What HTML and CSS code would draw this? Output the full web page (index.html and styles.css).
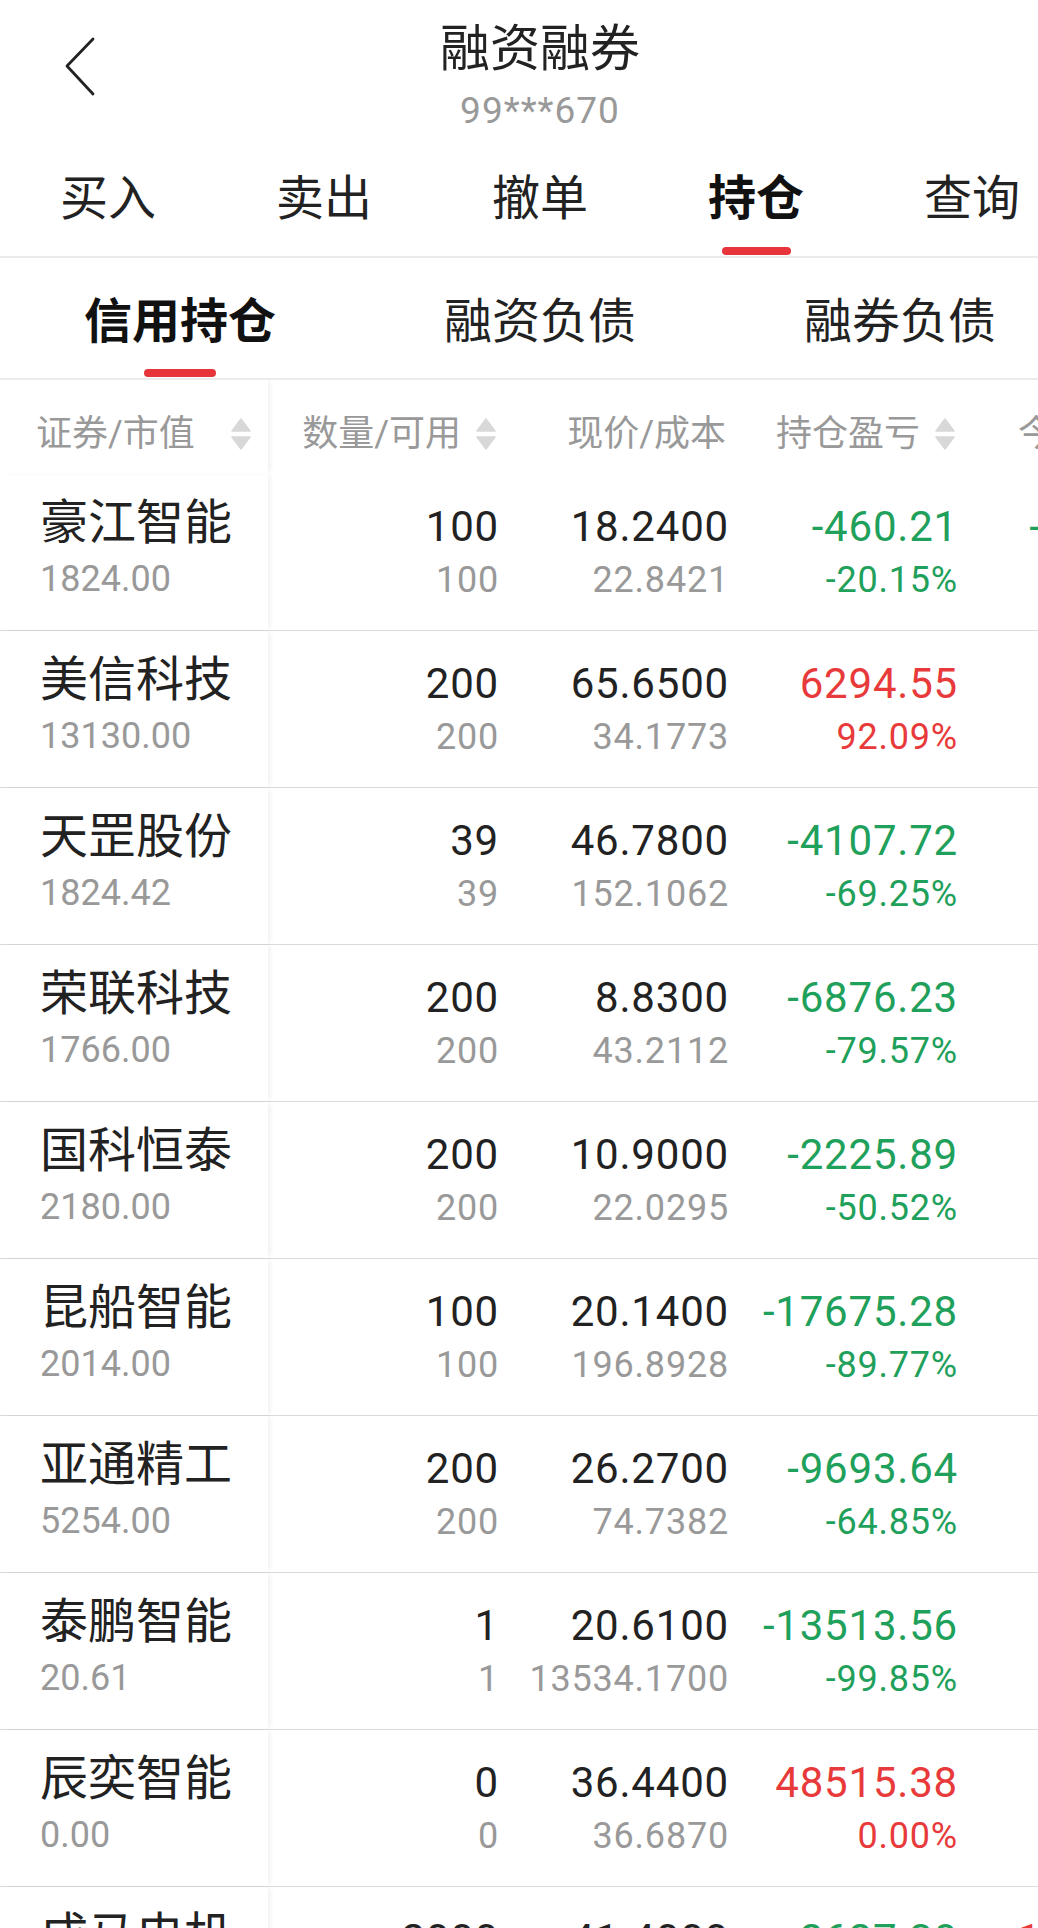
FILE: index.html
```html
<!DOCTYPE html>
<html lang="zh-CN">
<head>
<meta charset="utf-8">
<title>融资融券</title>
<link rel="stylesheet" href="styles.css">
</head>
<body>
<div class="app">
  <header class="nav">
    <a class="nav-back" href="#">
      <svg width="32" height="62" viewBox="0 0 32 62">
        <polyline points="29,3 3,30 29,58" fill="none" stroke="#222" stroke-width="2.8" stroke-linecap="round" stroke-linejoin="round"/>
      </svg>
    </a>
    <div class="nav-title">
      <div class="title">融资融券</div>
      <div class="account">99***670</div>
    </div>
    <div></div>
  </header>

  <nav class="tabs tabs-main">
    <div class="tab"><span class="tab-text">买入</span><i class="tab-bar"></i></div>
    <div class="tab"><span class="tab-text">卖出</span><i class="tab-bar"></i></div>
    <div class="tab"><span class="tab-text">撤单</span><i class="tab-bar"></i></div>
    <div class="tab active"><span class="tab-text">持仓</span><i class="tab-bar"></i></div>
    <div class="tab"><span class="tab-text">查询</span><i class="tab-bar"></i></div>
  </nav>

  <nav class="tabs tabs-sub">
    <div class="tab active"><span class="tab-text">信用持仓</span><i class="tab-bar"></i></div>
    <div class="tab"><span class="tab-text">融资负债</span><i class="tab-bar"></i></div>
    <div class="tab"><span class="tab-text">融券负债</span><i class="tab-bar"></i></div>
  </nav>

  <div class="grid-wrap">
    <div class="grid">
      <div class="row row-head">
        <div class="cell c-name"><span>证券/市值</span><svg class="sort" viewBox="0 0 20 32"><polygon points="10,1 19,13 1,13"/><polygon points="1,19 19,19 10,31"/></svg></div>
        <div class="cell c-qty"><span>数量/可用</span><svg class="sort" viewBox="0 0 20 32"><polygon points="10,1 19,13 1,13"/><polygon points="1,19 19,19 10,31"/></svg></div>
        <div class="cell c-price"><span>现价/成本</span></div>
        <div class="cell c-pnl"><span>持仓盈亏</span><svg class="sort" viewBox="0 0 20 32"><polygon points="10,1 19,13 1,13"/><polygon points="1,19 19,19 10,31"/></svg></div>
        <div class="cell c-today"><span>今日盈亏</span><svg class="sort" viewBox="0 0 20 32"><polygon points="10,1 19,13 1,13"/><polygon points="1,19 19,19 10,31"/></svg></div>
      </div>

      <div class="row">
        <div class="cell c-name"><div class="l1">豪江智能</div><div class="l2">1824.00</div></div>
        <div class="cell c-qty"><div class="l1">100</div><div class="l2">100</div></div>
        <div class="cell c-price"><div class="l1">18.2400</div><div class="l2">22.8421</div></div>
        <div class="cell c-pnl down"><div class="l1">-460.21</div><div class="l2">-20.15%</div></div>
        <div class="cell c-today down"><div class="l1">-5460.21</div><div class="l2">-2.11%</div></div>
      </div>
      <div class="row">
        <div class="cell c-name"><div class="l1">美信科技</div><div class="l2">13130.00</div></div>
        <div class="cell c-qty"><div class="l1">200</div><div class="l2">200</div></div>
        <div class="cell c-price"><div class="l1">65.6500</div><div class="l2">34.1773</div></div>
        <div class="cell c-pnl up"><div class="l1">6294.55</div><div class="l2">92.09%</div></div>
        <div class="cell c-today"><div class="l1">0.00</div><div class="l2">0.00%</div></div>
      </div>
      <div class="row">
        <div class="cell c-name"><div class="l1">天罡股份</div><div class="l2">1824.42</div></div>
        <div class="cell c-qty"><div class="l1">39</div><div class="l2">39</div></div>
        <div class="cell c-price"><div class="l1">46.7800</div><div class="l2">152.1062</div></div>
        <div class="cell c-pnl down"><div class="l1">-4107.72</div><div class="l2">-69.25%</div></div>
        <div class="cell c-today"><div class="l1">0.00</div><div class="l2">0.00%</div></div>
      </div>
      <div class="row">
        <div class="cell c-name"><div class="l1">荣联科技</div><div class="l2">1766.00</div></div>
        <div class="cell c-qty"><div class="l1">200</div><div class="l2">200</div></div>
        <div class="cell c-price"><div class="l1">8.8300</div><div class="l2">43.2112</div></div>
        <div class="cell c-pnl down"><div class="l1">-6876.23</div><div class="l2">-79.57%</div></div>
        <div class="cell c-today"><div class="l1">0.00</div><div class="l2">0.00%</div></div>
      </div>
      <div class="row">
        <div class="cell c-name"><div class="l1">国科恒泰</div><div class="l2">2180.00</div></div>
        <div class="cell c-qty"><div class="l1">200</div><div class="l2">200</div></div>
        <div class="cell c-price"><div class="l1">10.9000</div><div class="l2">22.0295</div></div>
        <div class="cell c-pnl down"><div class="l1">-2225.89</div><div class="l2">-50.52%</div></div>
        <div class="cell c-today"><div class="l1">0.00</div><div class="l2">0.00%</div></div>
      </div>
      <div class="row">
        <div class="cell c-name"><div class="l1">昆船智能</div><div class="l2">2014.00</div></div>
        <div class="cell c-qty"><div class="l1">100</div><div class="l2">100</div></div>
        <div class="cell c-price"><div class="l1">20.1400</div><div class="l2">196.8928</div></div>
        <div class="cell c-pnl down"><div class="l1">-17675.28</div><div class="l2">-89.77%</div></div>
        <div class="cell c-today"><div class="l1">0.00</div><div class="l2">0.00%</div></div>
      </div>
      <div class="row">
        <div class="cell c-name"><div class="l1">亚通精工</div><div class="l2">5254.00</div></div>
        <div class="cell c-qty"><div class="l1">200</div><div class="l2">200</div></div>
        <div class="cell c-price"><div class="l1">26.2700</div><div class="l2">74.7382</div></div>
        <div class="cell c-pnl down"><div class="l1">-9693.64</div><div class="l2">-64.85%</div></div>
        <div class="cell c-today"><div class="l1">0.00</div><div class="l2">0.00%</div></div>
      </div>
      <div class="row">
        <div class="cell c-name"><div class="l1">泰鹏智能</div><div class="l2">20.61</div></div>
        <div class="cell c-qty"><div class="l1">1</div><div class="l2">1</div></div>
        <div class="cell c-price"><div class="l1">20.6100</div><div class="l2">13534.1700</div></div>
        <div class="cell c-pnl down"><div class="l1">-13513.56</div><div class="l2">-99.85%</div></div>
        <div class="cell c-today"><div class="l1">0.00</div><div class="l2">0.00%</div></div>
      </div>
      <div class="row">
        <div class="cell c-name"><div class="l1">辰奕智能</div><div class="l2">0.00</div></div>
        <div class="cell c-qty"><div class="l1">0</div><div class="l2">0</div></div>
        <div class="cell c-price"><div class="l1">36.4400</div><div class="l2">36.6870</div></div>
        <div class="cell c-pnl up"><div class="l1">48515.38</div><div class="l2">0.00%</div></div>
        <div class="cell c-today"><div class="l1">0.00</div><div class="l2">0.00%</div></div>
      </div>
      <div class="row">
        <div class="cell c-name"><div class="l1">成马电机</div><div class="l2">82800.00</div></div>
        <div class="cell c-qty"><div class="l1">2000</div><div class="l2">2000</div></div>
        <div class="cell c-price"><div class="l1">41.4000</div><div class="l2">42.7135</div></div>
        <div class="cell c-pnl down"><div class="l1">-2627.30</div><div class="l2">-3.08%</div></div>
        <div class="cell c-today up"><div class="l1">12627.30</div><div class="l2">1.52%</div></div>
      </div>
    </div>
  </div>
</div>
</body>
</html>
```

FILE: styles.css
```css
html, body {
    margin: 0;
    overflow: hidden;
    background: #fff;
}
body {
    font-family: Roboto, "Noto Sans CJK SC", sans-serif;
    color: #222;
}
.app {
    width: 1080px;
}

/* top bar */
.nav {
    display: grid;
    grid-template-columns: 1fr auto 1fr;
    height: 133px;
}
.nav-back {
    display: block;
    width: 32px;
    height: 62px;
    margin: 36px 0 0 64px;
}
.nav-title {
    padding-top: 19px;
    text-align: center;
}
.title {
    font-size: 50px;
    line-height: 60px;
}
.account {
    margin-top: 10px;
    font-size: 37px;
    line-height: 44px;
    letter-spacing: 1px;
    color: #999;
}

/* tabs */
.tabs {
    display: flex;
    border-bottom: 2px solid #ebebeb;
}
.tab {
    display: flex;
    flex-direction: column;
    align-items: center;
    flex: none;
    padding-top: 36px;
    padding-bottom: 1px;
}
.tab-text {
    font-size: 48px;
    line-height: 60px;
}
.tab-bar {
    display: block;
    width: 69px;
    height: 8px;
    border-radius: 4px;
    margin-top: 18px;
}
.tab.active .tab-text {
    font-weight: 700;
    color: #111;
}
.tab.active .tab-bar {
    background: #e8343b;
}
.tabs-main .tab {
    width: 216px;
}
.tabs-sub .tab {
    width: 360px;
    padding-top: 34px;
}
.tabs-sub .tab-bar {
    width: 72px;
    margin-top: 17px;
}

/* positions table */
.grid-wrap {
    overflow: hidden;
}
.grid {
    width: 1197px;
}
.row {
    display: flex;
    height: 157px;
    box-sizing: border-box;
    border-bottom: 1px solid #dadada;
}
.row-head {
    height: 94px;
    border-bottom: 0;
}
.cell {
    flex: none;
    box-sizing: border-box;
    text-align: right;
    padding-top: 23px;
    letter-spacing: 0.8px;
}
.cell .l1, .cell .l2 {
    margin-right: -3px;
}
.c-name {
    width: 268px;
    padding-left: 40px;
    text-align: left;
    padding-top: 19px;
    letter-spacing: 0;
    box-shadow: 4px 0 5px -2px rgba(0, 0, 0, 0.07);
}
.c-name .l1, .c-name .l2 {
    margin-right: 0;
}
.c-qty { width: 228px; }
.c-price { width: 230px; }
.c-pnl { width: 229px; }
.c-today { width: 242px; }

.row-head .cell {
    display: flex;
    align-items: center;
    justify-content: flex-end;
    gap: 15px;
    height: 78px;
    padding-top: 30px;
    font-size: 36px;
    line-height: 48px;
    letter-spacing: 0;
    color: #999;
}
.row-head .c-name {
    height: auto;
    align-items: flex-start;
    justify-content: space-between;
    padding: 30px 17px 0 36px;
}
.row-head .c-name .sort {
    margin-top: 8px;
}
.sort {
    width: 20px;
    height: 32px;
    flex: none;
}
.sort polygon {
    fill: #d8d8d8;
    stroke: #d8d8d8;
    stroke-width: 1.5;
    stroke-linejoin: round;
}

.l1 {
    font-size: 42px;
    line-height: 60px;
}
.l2 {
    font-size: 36px;
    line-height: 46px;
    color: #999;
}
.c-name .l1 {
    font-size: 48px;
    line-height: 60px;
}
.c-name .l2 {
    line-height: 53px;
}
.up .l1, .up .l2 {
    color: #e83a3a;
}
.down .l1, .down .l2 {
    color: #1fa05b;
}
```
